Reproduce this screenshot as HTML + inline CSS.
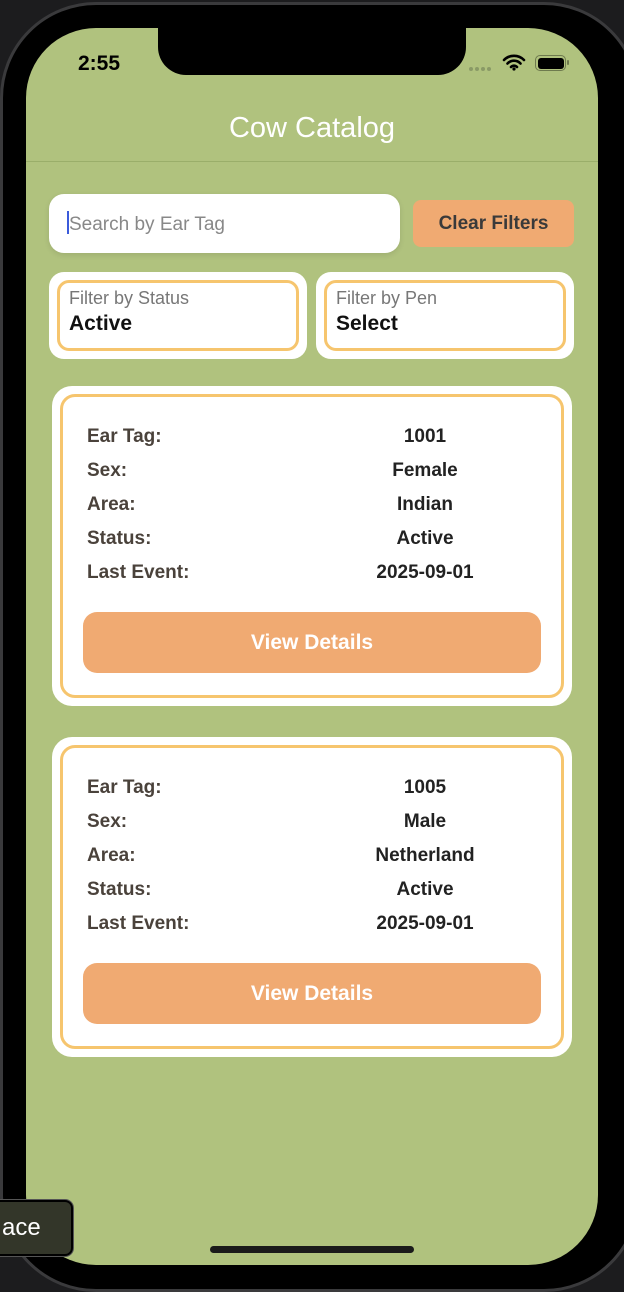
<!DOCTYPE html>
<html><head><meta charset="utf-8"><style>
*{box-sizing:border-box;margin:0;padding:0}
body{width:624px;height:1288px;background:#1c1c1e;position:relative;overflow:hidden;font-family:"Liberation Sans",sans-serif}
.bezel{position:absolute;left:0;top:2px;width:640px;height:1290px;background:#000;border-radius:96px;border:3px solid #3a3a3c}
.screen{position:absolute;left:26px;top:28px;width:572px;height:1237px;background:#b0c27e;border-radius:70px;overflow:hidden}
.notch{position:absolute;left:132px;top:0;width:308px;height:47px;background:#000;border-radius:0 0 28px 28px}
.time{position:absolute;left:52px;top:24px;font-size:21px;font-weight:bold;color:#000}
.title{position:absolute;left:0;width:100%;top:84px;text-align:center;color:#fff;font-size:29px}
.hr{position:absolute;left:0;right:0;top:133px;height:1px;background:#9aae6a}
.abs{position:absolute}
.search{left:23px;top:166px;width:351px;height:59px;background:#fff;border-radius:15px;font-size:19px;color:#888;padding:17px 0 0 18px;box-shadow:0 2px 6px rgba(0,0,0,.1)}
.cursor{display:inline-block;width:2px;height:23px;background:#3b5bdb;vertical-align:-4px}
.clear{left:387px;top:172px;width:161px;height:47px;background:#f0aa72;border-radius:8px;font-size:19px;font-weight:bold;color:#3a3a3a;text-align:center;line-height:47px}
.fil{top:244px;width:258px;height:87px;background:#fff;border-radius:15px;padding:8px}
.fil div.in{width:100%;height:100%;border:3px solid #f6c56e;border-radius:12px;padding:5px 0 0 9px}
.fl{font-size:18px;color:#777}
.fv{font-size:21px;font-weight:bold;color:#111;margin-top:3px}
.card{left:26px;width:520px;height:320px;background:#fff;border-radius:20px;padding:8px}
.card .in{width:100%;height:100%;border:3px solid #f6c56e;border-radius:15px;position:relative}
.row{position:absolute;left:24px;width:460px;font-size:19px;font-weight:bold;color:#4a423b;height:34px}
.row span{position:absolute;left:338px;transform:translateX(-50%);color:#222;white-space:nowrap}
.btn{position:absolute;left:20px;top:215px;width:458px;height:61px;background:#f0aa72;border-radius:14px;color:#fff;font-size:21px;font-weight:bold;text-align:center;line-height:61px}
.home{position:absolute;left:210px;top:1246px;width:204px;height:7px;background:#1a1a1a;border-radius:4px}
.tip{position:absolute;left:-10px;top:1200px;width:83px;height:56px;background:#333629;border:2px solid #000;border-radius:8px;color:#fff;font-size:24px;line-height:52px;padding-left:10px;box-shadow:0 0 0 1px #555}
.dots{position:absolute;left:443px;top:39px;display:flex;gap:2px}
.dots i{display:block;width:4px;height:4px;border-radius:2px;background:#8a9a66}
</style></head><body>
<div class="bezel"></div>
<div class="screen">
 <div class="notch"></div>
 <div class="time">2:55</div>
 <div class="dots"><i></i><i></i><i></i><i></i></div>
 <svg class="abs" style="left:476px;top:25px" width="24" height="18" viewBox="0 0 24 18"><path d="M2 7a14 14 0 0 1 20 0M5.5 10.5a9 9 0 0 1 13 0M9 14a4 4 0 0 1 6 0" stroke="#000" stroke-width="2.6" fill="none" stroke-linecap="round"/><circle cx="12" cy="16" r="1.6" fill="#000"/></svg>
 <div class="abs" style="left:509px;top:27px;width:31px;height:16px;border:1.5px solid #6e7a4e;border-radius:5px;padding:1.5px"><div style="width:100%;height:100%;background:#000;border-radius:3px"></div></div>
 <div class="abs" style="left:541px;top:32px;width:2px;height:5px;background:#6e7a4e;border-radius:1px"></div>
 <div class="title">Cow Catalog</div>
 <div class="hr"></div>
 <div class="abs search"><span class="cursor"></span>Search by Ear Tag</div>
 <div class="abs clear">Clear Filters</div>
 <div class="abs fil" style="left:23px"><div class="in"><div class="fl">Filter by Status</div><div class="fv">Active</div></div></div>
 <div class="abs fil" style="left:290px"><div class="in"><div class="fl">Filter by Pen</div><div class="fv">Select</div></div></div>

 <div class="abs card" style="top:358px"><div class="in">
  <div class="row" style="top:29px">Ear Tag:<span>1001</span></div>
  <div class="row" style="top:63px">Sex:<span>Female</span></div>
  <div class="row" style="top:97px">Area:<span>Indian</span></div>
  <div class="row" style="top:131px">Status:<span>Active</span></div>
  <div class="row" style="top:165px">Last Event:<span>2025-09-01</span></div>
  <div class="btn">View Details</div>
 </div></div>
 <div class="abs card" style="top:709px"><div class="in">
  <div class="row" style="top:29px">Ear Tag:<span>1005</span></div>
  <div class="row" style="top:63px">Sex:<span>Male</span></div>
  <div class="row" style="top:97px">Area:<span>Netherland</span></div>
  <div class="row" style="top:131px">Status:<span>Active</span></div>
  <div class="row" style="top:165px">Last Event:<span>2025-09-01</span></div>
  <div class="btn">View Details</div>
 </div></div>
</div>
<div class="home"></div>
<div class="tip">ace</div>
</body></html>
